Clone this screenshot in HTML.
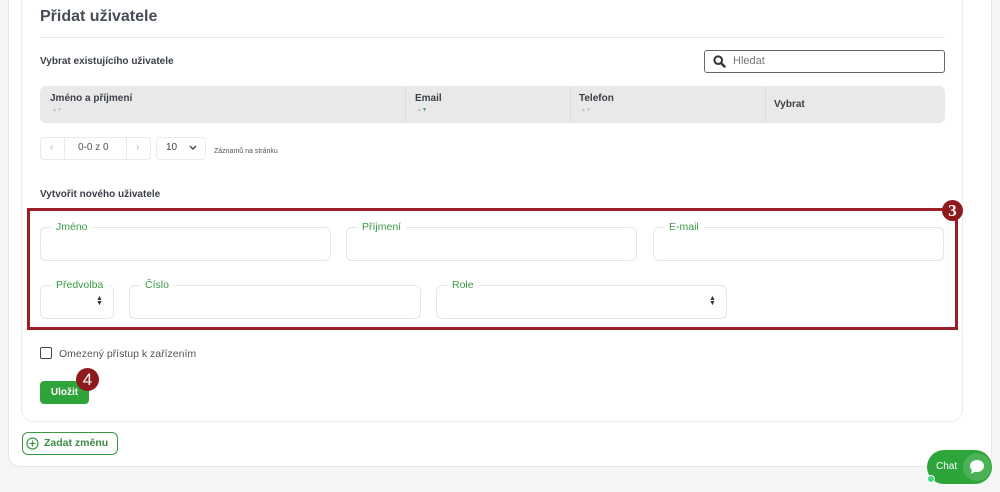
<!DOCTYPE html><html><head><meta charset="utf-8"><style>
*{box-sizing:border-box;margin:0;padding:0}
body{width:1000px;height:492px;background:#f4f5f5;font-family:"Liberation Sans",sans-serif;position:relative;overflow:hidden;color:#3d434b}
.a{position:absolute}
.fld{position:absolute;border:1px solid #e3e7e3;border-radius:6px;background:#fff}
.lbl{position:absolute;top:-7px;left:10px;background:#fff;padding:0 5px;font-size:10.5px;color:#3b9a45;line-height:12px}
.b{font-weight:bold;font-size:10px;color:#3b4048}
</style></head><body>
<div class="a" style="left:8px;top:-20px;width:984px;height:487px;background:#fff;border:1px solid #e4e6e6;border-radius:12px"></div>
<div class="a" style="left:21px;top:-20px;width:942px;height:442px;background:#fff;border:1px solid #eceeee;border-radius:12px"></div>
<div class="a" style="left:40px;top:8px;font-size:16px;font-weight:bold;color:#474d55">Přidat uživatele</div>
<div class="a" style="left:40px;top:37px;width:905px;height:1px;background:#e6e8e8"></div>
<div class="a b" style="left:40px;top:56px">Vybrat existujícího uživatele</div>
<div class="a" style="left:704px;top:50px;width:241px;height:23px;border:1px solid #666;border-radius:3px"></div>
<svg class="a" style="left:713px;top:55px" width="13" height="13" viewBox="0 0 13 13"><circle cx="5.2" cy="5.2" r="3.8" fill="none" stroke="#333" stroke-width="2"/><path d="M8 8l3.5 3.5" stroke="#333" stroke-width="2.4" stroke-linecap="round"/></svg>
<div class="a" style="left:733px;top:55px;font-size:11px;color:#777">Hledat</div>
<div class="a" style="left:40px;top:86px;width:905px;height:37px;background:#e9e9e9;border-radius:6px"></div>
<div class="a" style="left:405px;top:86px;width:1px;height:37px;background:#dcdcdc"></div>
<div class="a" style="left:570px;top:86px;width:1px;height:37px;background:#dcdcdc"></div>
<div class="a" style="left:765px;top:86px;width:1px;height:37px;background:#dcdcdc"></div>
<div class="a b" style="left:50px;top:93px">Jméno a příjmení</div>
<div class="a b" style="left:415px;top:93px">Email</div>
<div class="a b" style="left:579px;top:93px">Telefon</div>
<div class="a b" style="left:774px;top:99px">Vybrat</div>
<div class="a" style="left:52px;top:107px;font-size:5px;color:#bbb">▲▼</div>
<div class="a" style="left:417px;top:107px;font-size:5px;color:#bbb">▲<span style="color:#3b9a45">▼</span></div>
<div class="a" style="left:581px;top:107px;font-size:5px;color:#bbb">▲▼</div>
<div class="a" style="left:40px;top:137px;width:111px;height:23px;border:1px solid #eaeaea;border-radius:4px"></div>
<div class="a" style="left:64px;top:137px;width:1px;height:23px;background:#eaeaea"></div>
<div class="a" style="left:126px;top:137px;width:1px;height:23px;background:#eaeaea"></div>
<div class="a" style="left:50px;top:142px;font-size:10px;color:#aaa">‹</div>
<div class="a" style="left:136px;top:142px;font-size:10px;color:#aaa">›</div>
<div class="a" style="left:78px;top:142px;font-size:10px;color:#555">0-0 z 0</div>
<div class="a" style="left:156px;top:137px;width:50px;height:23px;border:1px solid #eaeaea;border-radius:4px"></div>
<div class="a" style="left:166px;top:142px;font-size:10px;color:#444">10</div>
<svg class="a" style="left:189px;top:145px" width="8" height="6"><path d="M1 1l3 3 3-3" fill="none" stroke="#444" stroke-width="1.4"/></svg>
<div class="a" style="left:214px;top:148px;font-size:7px;color:#555">Záznamů na stránku</div>
<div class="a b" style="left:40px;top:189px">Vytvořit nového uživatele</div>
<div class="a" style="left:27px;top:208px;width:931px;height:122px;border:3px solid #9b1f24"></div>
<div class="a" style="left:942px;top:200px;width:21px;height:21px;border-radius:50%;background:#8e1a1e;color:#fff;font:bold 17px 'Liberation Serif',serif;text-align:center;line-height:21px">3</div>
<div class="fld" style="left:40px;top:227px;width:291px;height:34px"><span class="lbl">Jméno</span></div>
<div class="fld" style="left:346px;top:227px;width:291px;height:34px"><span class="lbl">Příjmení</span></div>
<div class="fld" style="left:653px;top:227px;width:291px;height:34px"><span class="lbl">E-mail</span></div>
<div class="fld" style="left:40px;top:285px;width:74px;height:34px"><span class="lbl">Předvolba</span><span class="a" style="left:55px;top:10px;font-size:7px;line-height:5px;color:#333">▲<br>▼</span></div>
<div class="fld" style="left:129px;top:285px;width:292px;height:34px"><span class="lbl">Číslo</span></div>
<div class="fld" style="left:436px;top:285px;width:291px;height:34px"><span class="lbl">Role</span><span class="a" style="left:272px;top:10px;font-size:7px;line-height:5px;color:#333">▲<br>▼</span></div>
<div class="a" style="left:40px;top:347px;width:12px;height:12px;border:1.5px solid #444;border-radius:2px"></div>
<div class="a" style="left:59px;top:348px;font-size:10.5px;color:#555">Omezený přístup k zařízením</div>
<div class="a" style="left:40px;top:381px;width:49px;height:23px;background:#2fa43b;border-radius:4px;color:#fff;font-size:10px;font-weight:bold;text-align:center;line-height:23px">Uložit</div>
<div class="a" style="left:76px;top:368px;width:23px;height:23px;border-radius:50%;background:#8e1a1e;color:#fff;font-size:17px;text-align:center;line-height:23px">4</div>
<div class="a" style="left:22px;top:432px;width:96px;height:23px;border:1px solid #3b9a45;border-radius:6px;background:#fff"></div>
<svg class="a" style="left:26px;top:437px" width="13" height="13"><circle cx="6.5" cy="6.5" r="5.5" fill="none" stroke="#3b9a45" stroke-width="1.2"/><path d="M6.5 3.5v6M3.5 6.5h6" stroke="#3b9a45" stroke-width="1.2"/></svg>
<div class="a" style="left:44px;top:437px;font-size:10.5px;font-weight:bold;color:#3b8a45">Zadat změnu</div>
<div class="a" style="left:927px;top:450px;width:65px;height:34px;background:#2ea53a;border-radius:17px"></div>
<div class="a" style="left:936px;top:461px;font-size:10px;color:#fff">Chat</div>
<div class="a" style="left:963px;top:453px;width:28px;height:28px;border-radius:50%;background:#4cb257"></div>
<svg class="a" style="left:967px;top:457px" width="20" height="20"><ellipse cx="10" cy="9" rx="7" ry="6" fill="#fff"/><path d="M5 13l-1 4 5-3z" fill="#fff"/></svg>
<div class="a" style="left:927px;top:475px;width:8px;height:8px;border-radius:50%;background:#3ddc84;border:1px solid #fff"></div>
</body></html>
